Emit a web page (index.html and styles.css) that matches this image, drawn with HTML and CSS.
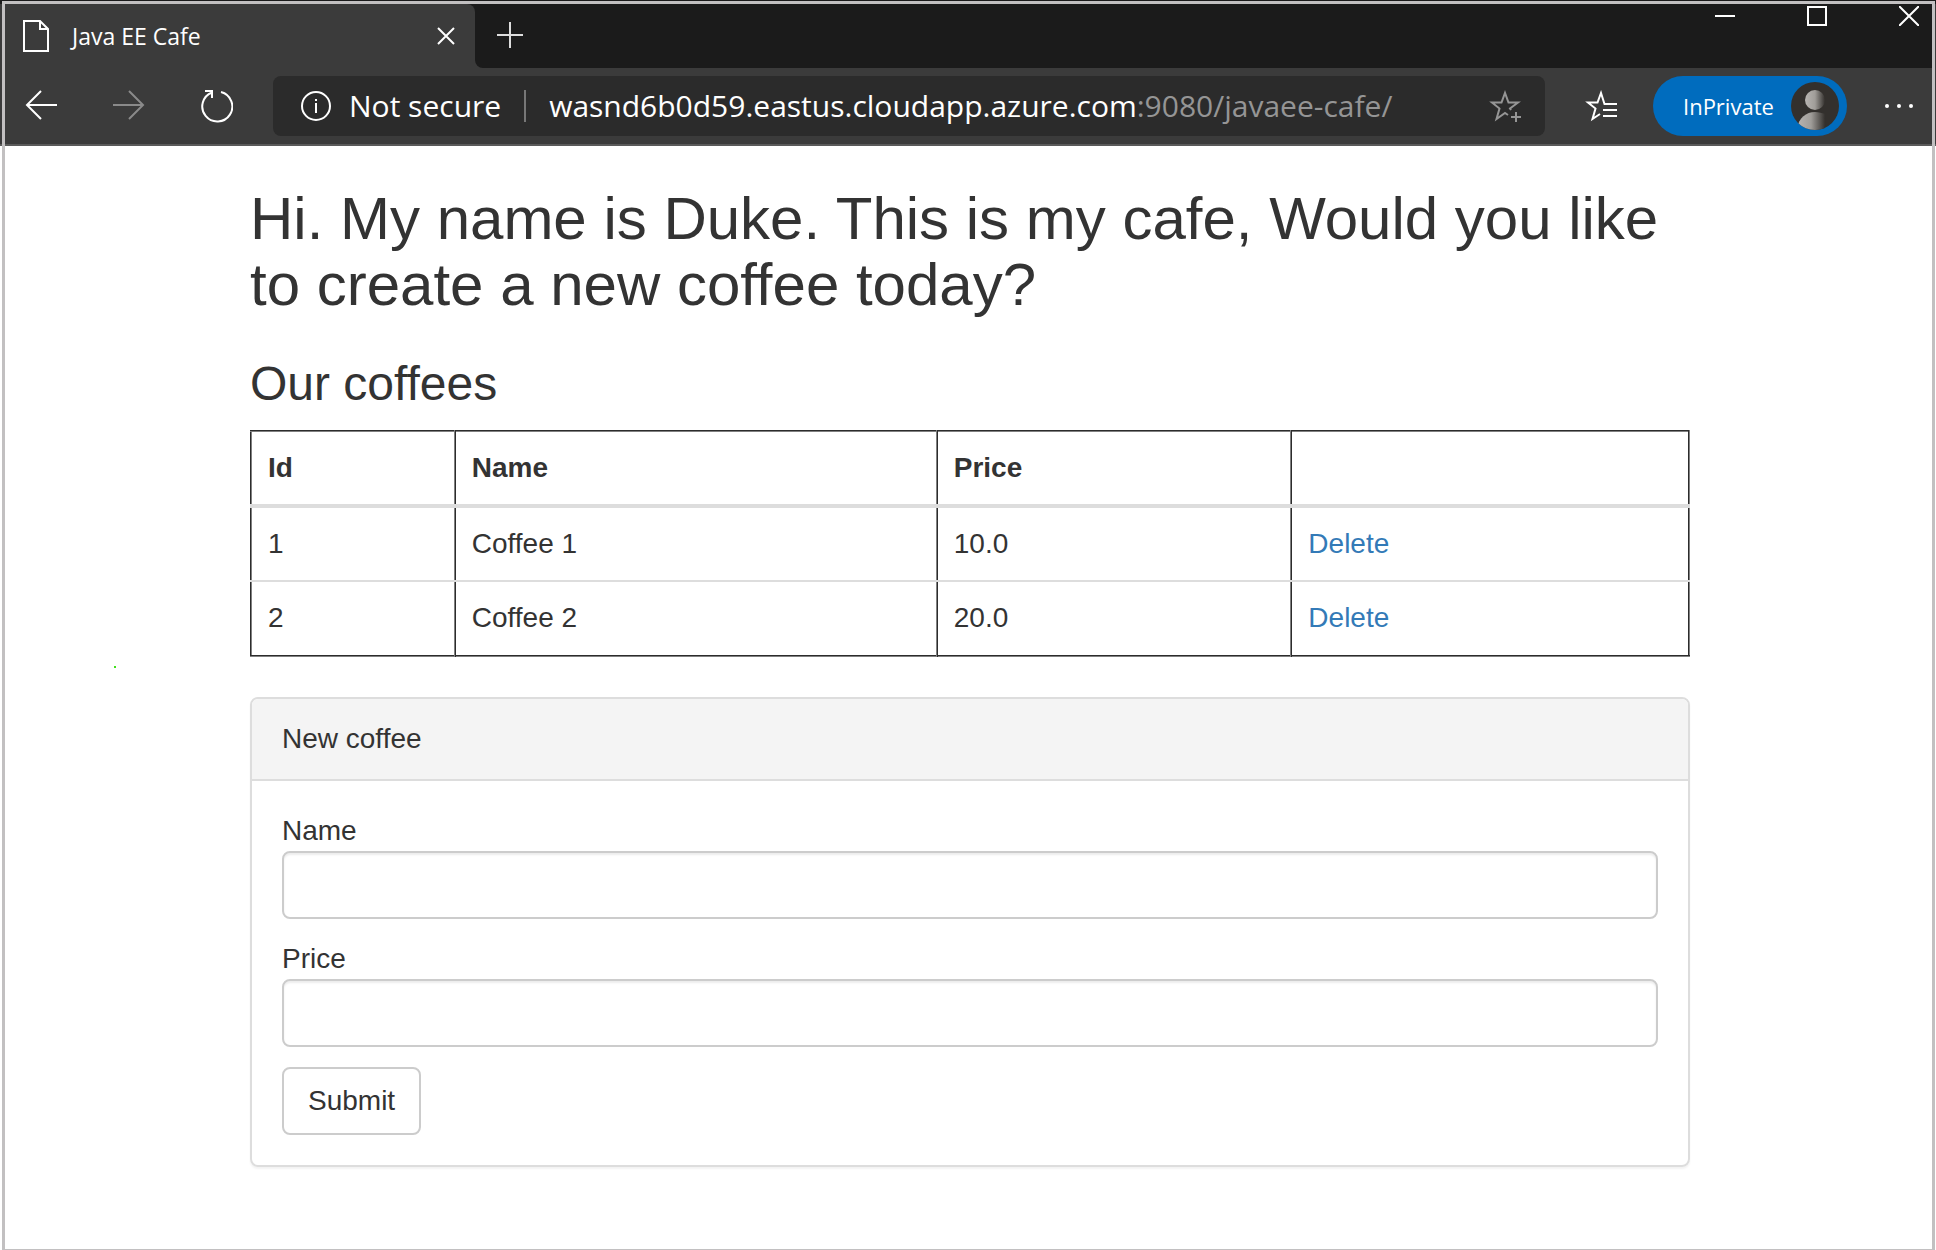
FILE: index.html
```html
<!DOCTYPE html>
<html lang="en">
<head>
<meta charset="utf-8">
<title>Java EE Cafe</title>
<link rel="stylesheet" href="styles.css">
</head>
<body>
<div class="window">
  <header class="chrome">
    <div class="tabstrip">
      <div class="tab">
        <svg class="icon" width="28" height="34" viewBox="0 0 28 34" fill="none" stroke="#fff" stroke-width="2"><path d="M2 2H18L26 10V32H2ZM18 2V10H26"/></svg>
        <span class="tab-title">Java EE Cafe</span>
        <button class="icon-button" aria-label="Close tab"><svg width="18" height="18" viewBox="0 0 18 18" stroke="#fff" stroke-width="2"><path d="M1 1L17 17M17 1L1 17"/></svg></button>
      </div>
      <div class="strip-rest">
        <button class="icon-button" aria-label="New tab"><svg width="26" height="26" viewBox="0 0 26 26" stroke="#ddd" stroke-width="2"><path d="M13 0V26M0 13H26"/></svg></button>
        <div class="window-controls">
          <button class="icon-button" aria-label="Minimize"><svg width="20" height="20" viewBox="0 0 20 20" stroke="#fff" stroke-width="2"><path d="M0 10H20"/></svg></button>
          <button class="icon-button" aria-label="Maximize"><svg width="20" height="20" viewBox="0 0 20 20" fill="none" stroke="#fff" stroke-width="2"><path d="M1 1H19V19H1Z"/></svg></button>
          <button class="icon-button" aria-label="Close"><svg width="20" height="20" viewBox="0 0 20 20" stroke="#fff" stroke-width="2"><path d="M0 0L20 20M20 0L0 20"/></svg></button>
        </div>
      </div>
    </div>
    <nav class="toolbar">
      <div class="nav-buttons">
        <button class="icon-button" aria-label="Back"><svg width="32" height="32" viewBox="0 0 32 32" fill="none" stroke="#fff" stroke-width="2"><path d="M32 16H2M16 2L2 16L16 30"/></svg></button>
        <button class="icon-button" aria-label="Forward"><svg width="32" height="32" viewBox="0 0 32 32" fill="none" stroke="#8a8a8a" stroke-width="2"><path d="M0 16H30M16 2L30 16L16 30"/></svg></button>
        <button class="icon-button" aria-label="Refresh"><svg width="32" height="34" viewBox="0 0 32 34" fill="none" stroke="#fff" stroke-width="2"><path d="M20 3A15 15 0 1 1 11 3.500M4 2H11V9"/></svg></button>
      </div>
      <div class="address">
        <svg class="icon" width="30" height="30" viewBox="0 0 30 30" fill="none" stroke="#fff" stroke-width="2"><circle cx="15" cy="15" r="14"/><path d="M15 12V22M15 8V10"/></svg>
        <span class="security">Not secure</span>
        <span class="divider"></span>
        <span class="url">wasnd6b0d59.eastus.cloudapp.azure.com<span class="path">:9080/javaee-cafe/</span></span>
        <button class="icon-button" aria-label="Add to favorites"><svg width="32" height="32" viewBox="0 0 32 32" fill="none" stroke="#959595" stroke-width="2"><path d="M22 20L21 18.500L29 12.500H19.500L16 3L12.500 12.500H3L10.500 18.500L7.500 29L16 23L19 25M27 22V32M22 27H32"/></svg></button>
      </div>
      <button class="icon-button" aria-label="Favorites"><svg width="32" height="32" viewBox="0 0 32 32" fill="none" stroke="#fff" stroke-width="2"><path d="M32 14H19.500L16 3L12.500 12.500H3L10.500 18.500L7.500 29L15 24M18 20H32M18 26H32"/></svg></button>
      <button class="profile">InPrivate
        <svg width="48" height="48" viewBox="0 0 48 48"><defs><linearGradient id="shade"><stop offset="0" stop-color="#b8b5b2"/><stop offset=".5" stop-color="#a09d99"/><stop offset="1" stop-color="#33302d"/></linearGradient><clipPath id="round"><circle cx="24" cy="24" r="24"/></clipPath></defs><g clip-path="url(#round)"><path d="M0 0H48V48H0Z" fill="#33302d"/><circle cx="24" cy="18" r="10" fill="url(#shade)"/><path d="M6 46C8 36 15 30 24 30C28 30 31 31 34 32V48H6Z" fill="url(#shade)"/></g></svg>
      </button>
      <button class="icon-button" aria-label="Settings"><svg width="28" height="6" viewBox="0 0 28 6" fill="#fff"><circle cx="2" cy="3" r="2"/><circle cx="14" cy="3" r="2"/><circle cx="26" cy="3" r="2"/></svg></button>
    </nav>
  </header>
  <main class="container">
    <h1>Hi. My name is Duke. This is my cafe, Would you like to create a new coffee today?</h1>
    <h2>Our coffees</h2>
    <table class="coffees">
      <thead><tr><th>Id</th><th>Name</th><th>Price</th><th></th></tr></thead>
      <tbody>
        <tr><td>1</td><td>Coffee 1</td><td>10.0</td><td><a href="#">Delete</a></td></tr>
        <tr><td>2</td><td>Coffee 2</td><td>20.0</td><td><a href="#">Delete</a></td></tr>
      </tbody>
    </table>
    <section class="panel">
      <div class="panel-heading">New coffee</div>
      <form class="panel-body">
        <div class="field"><label for="name">Name</label><input id="name" type="text"></div>
        <div class="field"><label for="price">Price</label><input id="price" type="text"></div>
        <button class="submit" type="button">Submit</button>
      </form>
    </section>
  </main>
  <span class="speck"></span>
</div>
</body>
</html>
```
FILE: styles.css
```css
* { box-sizing: border-box; }

body {
  margin: 0;
  padding: 1px 1px 0 2px;
  color: #333;
  background: linear-gradient(#1b1b1b 4px, #3b3b3b 4px, #3b3b3b 144px, #5a5a5a 144px, #5a5a5a 146px, #fff 146px) no-repeat #fff;
  font: 28px/40px "Liberation Sans", Arial, sans-serif;
}

.window {
  position: relative;
  min-height: calc(100vh - 1px);
  border: 3px solid #c2c0c1;
  border-bottom-width: 1px;
}

/* Browser chrome */
.chrome {
  color: #fff;
  background: #3b3b3b;
  border-bottom: 2px solid #5a5a5a;
  font-family: "Open Sans", "Noto Sans", sans-serif;
}

.icon-button {
  display: flex;
  padding: 0;
  border: 0;
  background: none;
}

.icon { flex: none; }

.tabstrip {
  display: flex;
  height: 64px;
  background: linear-gradient(#1b1b1b 50%, #3b3b3b 50%);
}

.tab {
  display: flex;
  flex: none;
  align-items: center;
  gap: 22px;
  width: 470px;
  padding: 0 20px 0 17px;
  border-top-right-radius: 8px;
  background: #3b3b3b;
}

.tab-title {
  flex: 1;
  font-size: 23px;
}

.strip-rest {
  display: flex;
  flex: 1;
  align-items: flex-start;
  justify-content: space-between;
  padding: 18px 13px 0 22px;
  border-bottom-left-radius: 8px;
  background: #1b1b1b;
}

.window-controls {
  display: flex;
  gap: 72px;
  margin-top: -16px;
}

.toolbar {
  display: flex;
  align-items: center;
  height: 76px;
  padding: 0 19px 0 20px;
}

.nav-buttons {
  display: flex;
  gap: 56px;
  margin-right: 40px;
}

.address {
  display: flex;
  flex: 1;
  align-items: center;
  height: 60px;
  margin-right: 40px;
  padding: 0 24px 0 28px;
  border-radius: 8px;
  background: #2b2b2b;
  font-size: 30px;
}

.security { margin-left: 18px; }

.divider {
  width: 2px;
  height: 32px;
  margin: 0 23px;
  background: #777;
}

.url { flex: 1; }

.path { color: #959595; }

.profile {
  display: flex;
  align-items: center;
  justify-content: space-between;
  width: 194px;
  height: 60px;
  margin: 0 38px 0 36px;
  padding: 0 8px 0 30px;
  border: 0;
  border-radius: 30px;
  color: #fff;
  background: #006cbe;
  font: 22px "Open Sans", "Noto Sans", sans-serif;
}

/* Page */
.container {
  max-width: 1443px;
  margin: 0 auto;
  padding: 40px 0 80px 3px;
}

h1, h2 {
  margin: 0 0 20px;
  font-weight: 400;
}

h1 {
  margin-bottom: 40px;
  font-size: 60px;
  line-height: 66px;
}

h2 {
  font-size: 48px;
  line-height: 52px;
}

.coffees {
  width: 100%;
  margin-bottom: 40px;
  border: 2px groove gray;
  border-collapse: collapse;
}

.coffees th,
.coffees td {
  padding: 16px;
  text-align: left;
}

.coffees th { border-bottom: 4px solid #ddd; }

.coffees th + th,
.coffees td + td { border-left: 2px ridge gray; }

.coffees tr + tr td {
  padding-bottom: 17px;
  border-top: 2px solid #ddd;
}

a {
  color: #337ab7;
  text-decoration: none;
}

.panel {
  border: 2px solid #ddd;
  border-radius: 8px;
  box-shadow: 0 2px 2px rgba(0, 0, 0, .05);
}

.panel-heading {
  padding: 20px 30px;
  border-bottom: 2px solid #ddd;
  border-radius: 6px 6px 0 0;
  background: #f4f4f4;
}

.panel-body { padding: 30px; }

.field { margin-bottom: 20px; }

.field label { display: block; }

.field input {
  display: block;
  width: 100%;
  height: 68px;
  padding: 12px 24px;
  border: 2px solid #ccc;
  border-radius: 8px;
  box-shadow: inset 0 2px 2px rgba(0, 0, 0, .075);
  font: inherit;
}

.submit {
  display: block;
  padding: 12px 24px;
  border: 2px solid #ccc;
  border-radius: 8px;
  color: #333;
  background: #fff;
  font: inherit;
}

/* Stray mark in the left margin */
.speck {
  position: absolute;
  top: 662px;
  left: 109px;
  width: 2px;
  height: 2px;
  background: #3fe01a;
}
```
